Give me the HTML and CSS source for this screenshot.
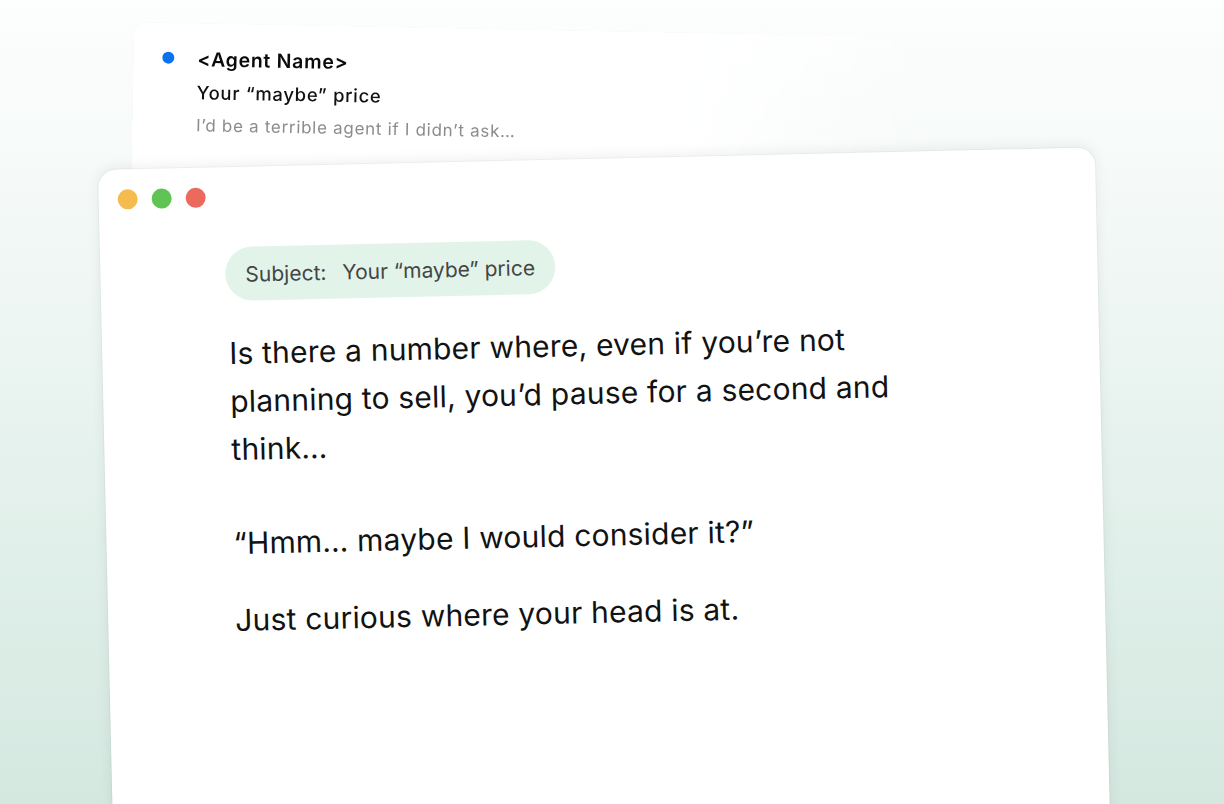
FILE: index.html
```html
<!DOCTYPE html>
<html lang="en">
<head>
<meta charset="utf-8">
<title>Your “maybe” price</title>
<link rel="stylesheet" href="styles.css">
</head>
<body>
<div class="scene">
  <div class="back-card">
    <span class="unread-dot"></span>
    <div class="preview">
      <div class="sender">&lt;Agent Name&gt;</div>
      <div class="subject">Your “maybe” price</div>
      <div class="snippet">I’d be a terrible agent if I didn’t ask…</div>
    </div>
  </div>
  <div class="front-card">
    <div class="lights">
      <span class="light light-yellow"></span>
      <span class="light light-green"></span>
      <span class="light light-red"></span>
    </div>
    <div class="message">
      <div class="subject-pill">
        <span class="pill-label">Subject:</span>
        <span class="pill-value">Your “maybe” price</span>
      </div>
      <p class="para para-first">Is there a number where, even if you’re not<br>planning to sell, you’d pause for a second and<br>think…</p>
      <p class="para para-quote">“Hmm… maybe I would consider it?”</p>
      <p class="para">Just curious where your head is at.</p>
    </div>
  </div>
</div>
</body>
</html>
```
FILE: styles.css
```css
* { box-sizing: border-box; }
html, body { margin: 0; padding: 0; }
body {
  width: 1224px;
  height: 804px;
  overflow: hidden;
  font-family: "Inter", "Noto Sans", sans-serif;
  background: linear-gradient(to bottom, #fdfefe 0%, #f4f9f7 25%, #e4f1ec 60%, #d4e8e0 100%);
}
.scene {
  position: relative;
  width: 1224px;
  height: 804px;
  overflow: hidden;
}

/* back (inbox preview) card */
.back-card {
  position: absolute;
  left: 134px;
  top: 22px;
  width: 1000px;
  height: 220px;
  transform: rotate(1.1deg);
  transform-origin: 0 0;
  background: #ffffff;
  border-radius: 14px;
  box-shadow: 0 0 0 1px rgba(0, 0, 0, 0.05), 0 2px 10px rgba(0, 0, 0, 0.06);
  padding: 20px 0 0 29px;
  display: flex;
  align-items: flex-start;
  gap: 23px;
  -webkit-mask-image: linear-gradient(to right, #000 0%, #000 52%, transparent 82%);
  mask-image: linear-gradient(to right, #000 0%, #000 52%, transparent 82%);
}
.unread-dot {
  flex: none;
  width: 12px;
  height: 12px;
  margin-top: 9px;
  border-radius: 50%;
  background: #0a72f0;
}
.preview {
  display: flex;
  flex-direction: column;
  line-height: 33px;
  letter-spacing: 0.7px;
}
.sender {
  font-size: 19.5px;
  font-weight: 600;
  color: #0b0b0b;
}
.subject {
  font-size: 18.5px;
  font-weight: 500;
  color: #111;
}
.snippet {
  font-size: 17px;
  font-weight: 400;
  color: #8c8c8c;
}

/* front (email) card */
.front-card {
  position: absolute;
  left: 98px;
  top: 170px;
  width: 997px;
  height: 720px;
  transform: rotate(-1.3deg);
  transform-origin: 0 0;
  background: #ffffff;
  border-radius: 18px;
  box-shadow: 0 -2px 14px rgba(0, 0, 0, 0.07), 0 0 0 1px rgba(0, 0, 0, 0.03);
  padding: 20px 19px;
}
.lights {
  display: flex;
  gap: 14px;
}
.light {
  width: 20px;
  height: 20px;
  border-radius: 50%;
}
.light-yellow { background: #f6bb4e; }
.light-green { background: #5fc454; }
.light-red { background: #ec695e; }

.message {
  margin-top: 40px;
  padding-left: 106px;
}
.subject-pill {
  display: inline-flex;
  align-items: center;
  gap: 16px;
  height: 54px;
  padding: 0 20px;
  border-radius: 27px;
  background: #e2f4ea;
  color: #454545;
  font-size: 21px;
}
.para {
  margin: 0;
  font-size: 30px;
  line-height: 48px;
  letter-spacing: 0.2px;
  color: #121212;
  padding-left: 2px;
}
.para-first { margin-top: 28px; margin-bottom: 46px; }
.para-quote { margin-bottom: 29px; }
```
